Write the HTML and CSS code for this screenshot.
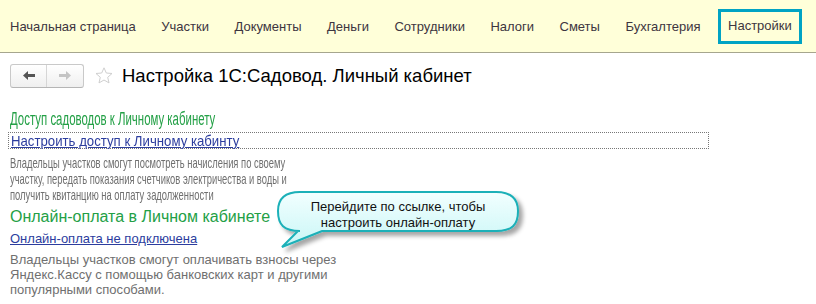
FILE: index.html
```html
<!DOCTYPE html>
<html lang="ru">
<head>
<meta charset="utf-8">
<link rel="stylesheet" href="styles.css">
</head>
<body>
<nav class="nav">
  <a class="nav-item">Начальная страница</a>
  <a class="nav-item">Участки</a>
  <a class="nav-item">Документы</a>
  <a class="nav-item">Деньги</a>
  <a class="nav-item">Сотрудники</a>
  <a class="nav-item">Налоги</a>
  <a class="nav-item">Сметы</a>
  <a class="nav-item">Бухгалтерия</a>
  <a class="nav-item active">Настройки</a>
</nav>
<div class="toolbar">
  <div class="navbtns">
    <span class="nb back"><svg width="12" height="9" viewBox="0 0 12 9"><path d="M0 4.5 L5 0 V3 H12 V6 H5 V9 Z" fill="#555"/></svg></span>
    <span class="nb fwd"><svg width="12" height="9" viewBox="0 0 12 9"><path d="M12 4.5 L7 0 V3 H0 V6 H7 V9 Z" fill="#c4c4c4"/></svg></span>
  </div>
  <svg class="star" width="18" height="17" viewBox="0 0 18 17"><path d="M9 0.8 L11.3 6 L17 6.5 L12.7 10.3 L14 15.9 L9 13 L4 15.9 L5.3 10.3 L1 6.5 L6.7 6 Z" fill="none" stroke="#cfcfcf" stroke-width="1"/></svg>
  <h1 class="title">Настройка 1С:Садовод. Личный кабинет</h1>
</div>
<main class="content">
  <section class="sec sec1">
    <h2 class="sec-title"><span class="squeeze-title">Доступ садоводов к Личному кабинету</span></h2>
    <div class="linkbox"><a class="link squeeze-link">Настроить доступ к Личному кабинту</a></div>
    <p class="desc squeeze-desc">Владельцы участков смогут посмотреть начисления по своему<br>участку, передать показания счетчиков электричества и воды и<br>получить квитанцию на оплату задолженности</p>
  </section>
  <section class="sec sec2">
    <h2 class="sec-title">Онлайн-оплата в Личном кабинете</h2>
    <div class="linkrow"><a class="link">Онлайн-оплата не подключена</a></div>
    <p class="desc">Владельцы участков смогут оплачивать взносы через<br>Яндекс.Кассу с помощью банковских карт и другими<br>популярными способами.</p>
  </section>
</main>
<div class="callout">
  <svg class="bubble" width="270" height="75" viewBox="0 0 270 75">
    <defs>
      <linearGradient id="bg" x1="0" y1="0" x2="0" y2="1">
        <stop offset="0" stop-color="#f2ffff"/>
        <stop offset="1" stop-color="#c9f6f6"/>
      </linearGradient>
      <filter id="sh" x="-10%" y="-20%" width="130%" height="160%">
        <feDropShadow dx="4" dy="4" stdDeviation="2" flood-color="#000" flood-opacity="0.35"/>
      </filter>
    </defs>
    <path d="M30 7 H226 C242 7 248 14 248 26 C248 40 242 46 226 46 H52 L12 62 L28 46 H30 C14 46 8 40 8 26 C8 14 14 7 30 7 Z" fill="url(#bg)" stroke="#1ab0b8" stroke-width="2" filter="url(#sh)"/>
  </svg>
  <div class="callout-text">Перейдите по ссылке, чтобы<br>настроить онлайн-оплату</div>
</div>
</body>
</html>
```

FILE: styles.css
```css
* { box-sizing: border-box; }
html, body { margin: 0; padding: 0; background: #fff; }
body {
  font-family: Arial, "Liberation Sans", sans-serif;
  font-size: 13px;
  color: #333;
  width: 816px;
  height: 304px;
  overflow: hidden;
}
.nav {
  height: 53px;
  background: #ffffd9;
  border-bottom: 1px solid #a6a68e;
  display: flex;
  align-items: center;
  padding-left: 10px;
  gap: 25.5px;
}
.nav-item {
  color: #3d3540;
  font-size: 13px;
  white-space: nowrap;
}
.nav-item.active {
  margin-left: -8px;
  border: 3px solid #00a3c4;
  padding: 6px 7px 7px;
  line-height: 16px;
}
.toolbar {
  display: flex;
  align-items: center;
  margin-top: 10px;
  padding-left: 10px;
  height: 25px;
}
.navbtns {
  display: flex;
  border: 1px solid #c9c9c9;
  border-bottom-color: #b5b5b5;
  border-radius: 3px;
  background: linear-gradient(#ffffff, #efefef);
  height: 24px;
}
.nb {
  width: 36px;
  display: flex;
  align-items: center;
  justify-content: center;
}
.nb.back { border-right: 1px solid #d6d6d6; }
.star { margin-left: 11px; margin-top: -1px; }
.title {
  margin: 0 0 0 9px;
  font-size: 18.5px;
  font-weight: normal;
  color: #000;
  line-height: 22px;
}
.content { padding-left: 10px; }
.sec-title {
  margin: 0;
  font-weight: normal;
  font-size: 16px;
  color: #23a046;
  line-height: 20px;
  white-space: nowrap;
}
.squeeze-title,
.squeeze-link,
.squeeze-desc {
  transform-origin: 0 0;
  white-space: nowrap;
}
.squeeze-title { display: inline-block; transform: scaleX(0.635); }
.squeeze-link { display: inline-block; transform: scaleX(0.88); }
.squeeze-desc { transform: scaleX(0.647); }
.sec1 { margin-top: 21px; }
.sec1 .sec-title { font-size: 18px; }
.linkbox {
  margin-left: -2px;
  width: 701px;
  height: 17px;
  border: 1px dotted #777;
  padding-left: 2px;
  line-height: 15px;
  margin-top: 3px;
}
.link {
  color: #2c3d9e;
  text-decoration: underline;
  font-size: 14px;
}
.linkbox .link { font-size: 15px; }
.desc {
  margin: 0;
  color: #6f6f6f;
  font-size: 13px;
  line-height: 15px;
  white-space: nowrap;
}
.sec1 .desc {
  margin-top: 6px;
  font-size: 14.5px;
  line-height: 16px;
}
.sec2 { margin-top: 4px; }
.linkrow { margin-top: 4px; line-height: 16px; }
.linkrow .link { font-size: 13px; }
.sec2 .desc { margin-top: 5px; }
.callout {
  position: absolute;
  left: 270px;
  top: 185px;
  width: 270px;
  height: 75px;
}
.bubble { display: block; }
.callout-text {
  position: absolute;
  left: 8px;
  top: 14px;
  width: 240px;
  text-align: center;
  color: #111;
  font-size: 13px;
  line-height: 16px;
}
```
